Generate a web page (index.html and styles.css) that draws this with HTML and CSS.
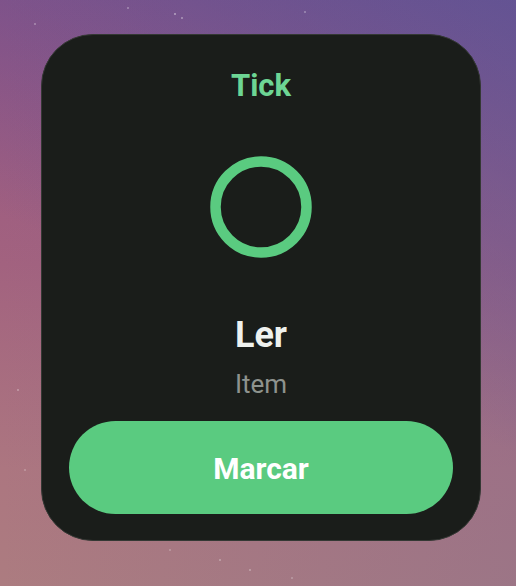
FILE: index.html
```html
<!DOCTYPE html>
<html lang="pt">
<head>
<meta charset="utf-8">
<title>Tick</title>
<link rel="stylesheet" href="styles.css">
</head>
<body>
<div class="screen">
  <div class="card">
    <div class="title">Tick</div>
    <svg class="ring" width="102" height="102" viewBox="0 0 102 102" aria-hidden="true">
      <circle cx="51" cy="51" r="45.5" fill="none" stroke="#5acb80" stroke-width="10.5"/>
    </svg>
    <div class="name">Ler</div>
    <div class="sub">Item</div>
    <button class="btn" type="button">Marcar</button>
  </div>
</div>
</body>
</html>
```
FILE: styles.css
```css
html, body {
  margin: 0;
  padding: 0;
}
body {
  width: 516px;
  height: 586px;
  overflow: hidden;
  font-family: Roboto, "Liberation Sans", sans-serif;
}
.screen {
  width: 516px;
  height: 586px;
  box-sizing: border-box;
  padding: 34px 0 0 41px;
  background:
    radial-gradient(circle at 175px 14px, rgba(255,255,255,0.35) 0 1px, transparent 1.5px),
    radial-gradient(circle at 182px 18px, rgba(255,255,255,0.3) 0 1px, transparent 1.5px),
    radial-gradient(circle at 128px 8px, rgba(255,255,255,0.25) 0 1px, transparent 1.5px),
    radial-gradient(circle at 305px 12px, rgba(255,255,255,0.25) 0 1px, transparent 1.5px),
    radial-gradient(circle at 35px 24px, rgba(255,255,255,0.25) 0 1px, transparent 1.5px),
    radial-gradient(circle at 18px 390px, rgba(255,255,255,0.25) 0 1px, transparent 1.5px),
    radial-gradient(circle at 25px 470px, rgba(255,255,255,0.2) 0 1px, transparent 1.5px),
    radial-gradient(circle at 220px 560px, rgba(255,255,255,0.25) 0 1px, transparent 1.5px),
    radial-gradient(circle at 250px 570px, rgba(255,255,255,0.25) 0 1px, transparent 1.5px),
    radial-gradient(circle at 292px 578px, rgba(255,255,255,0.2) 0 1px, transparent 1.5px),
    radial-gradient(circle at 170px 550px, rgba(255,255,255,0.2) 0 1px, transparent 1.5px),
    linear-gradient(90deg, rgba(120, 100, 150, 0) 0%, rgba(115, 100, 150, 0.28) 100%),
    linear-gradient(205deg, #5e4d92 0%, rgba(100, 80, 145, 0.55) 25%, rgba(120, 90, 140, 0) 55%),
    linear-gradient(180deg, #965584 0%, #a2627f 45%, #ac7680 80%, #ac7c80 100%);
}
.card {
  width: 440px;
  height: 507px;
  box-sizing: border-box;
  background: #1a1d1a;
  border: 1.5px solid #343834;
  border-radius: 52px;
  padding: 35px 27px 0;
  display: flex;
  flex-direction: column;
  align-items: center;
}
.title {
  font-size: 31px;
  line-height: 1;
  font-weight: 700;
  color: #6dd594;
}
.ring {
  display: block;
  margin-top: 55px;
}
.name {
  margin-top: 59px;
  font-size: 36px;
  line-height: 1;
  font-weight: 700;
  color: #eef1ee;
}
.sub {
  margin-top: 18px;
  font-size: 26px;
  line-height: 1;
  font-weight: 400;
  color: #8e938e;
}
.btn {
  margin-top: 24px;
  width: 384px;
  height: 93px;
  border: none;
  border-radius: 47px;
  background: #5acb80;
  color: #ffffff;
  font-family: Roboto, "Liberation Sans", sans-serif;
  font-size: 30px;
  font-weight: 700;
  padding: 1px 0 0;
  cursor: pointer;
}
```
